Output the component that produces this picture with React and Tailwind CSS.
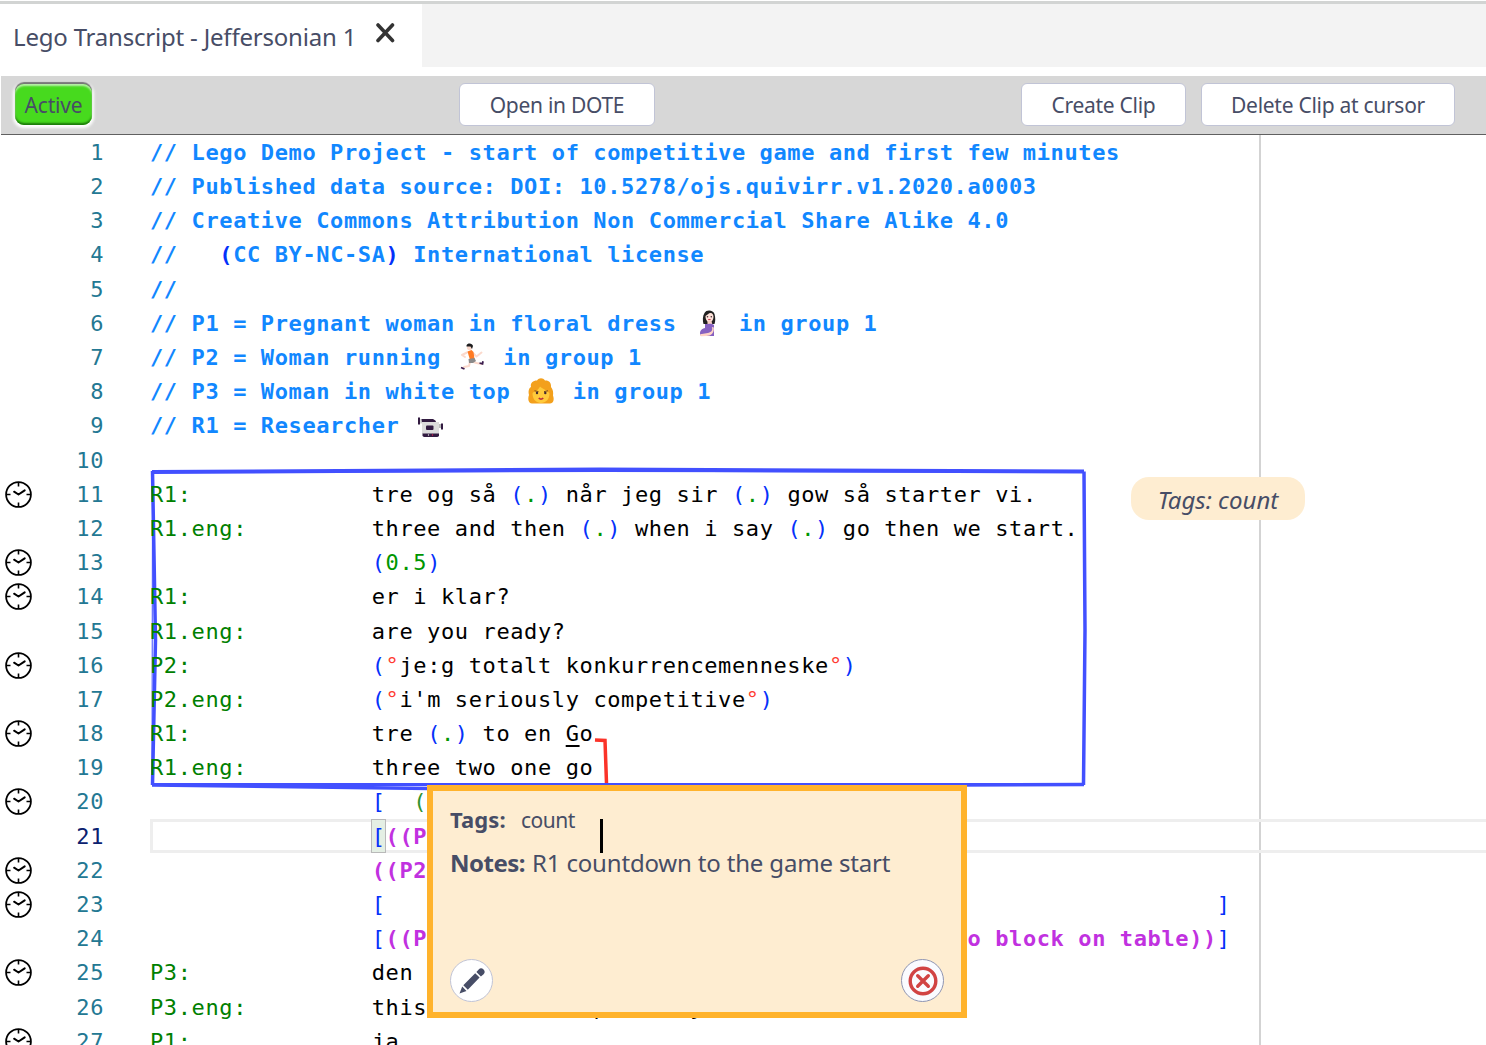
import React from "react";

const CODE =
  "font-['DejaVu_Sans_Mono',monospace] text-[22px] tracking-[0.610px] whitespace-pre";
const UI = "font-['Noto_Sans','Open_Sans',sans-serif] text-[#474d66] whitespace-nowrap";

const TONES = {
  c: "font-bold text-[#1187ff]",
  b: "text-[#0431fa]",
  bb: "font-bold text-[#0431fa]",
  s: "text-[#008000]",
  d: "text-[#009600]",
  t: "text-black",
  u: "text-black underline decoration-2 underline-offset-[4px]",
  r: "text-[#ff3a30]",
  g: "text-[#319331]",
  m: "font-bold text-[#c131e0]",
};

function Emoji({ children }) {
  return (
    <svg viewBox="0 0 34 34" className="mr-[0.7px] inline-block h-[34px] w-[34px] shrink-0">
      {children}
    </svg>
  );
}

const Pregnant = () => (
  <Emoji>
    <path d="M13.500 17c-1-3-1-8 1-11 2-4 9-3 10 1 1 4 1 7 0 10z" fill="#212121" />
    <path d="M15.500 9c2-1 3-3 5-3 2 0 3 2 3 4 0 3-2 5-4 5s-4-2-4-6z" fill="#ffe3da" />
    <path d="M17.500 14h4l1 4h-5z" fill="#f7cfc4" />
    <path d="M15 17c3 0 7-1 9 1v11H11c-2-3-1-7 4-8z" fill="#8661c1" />
    <path d="M21.800 20c1.500 3.500-1 5.500-4 6l-6 1c-2 0-2.500 2-.5 2.200l5-.2c5 0 8-3 7.500-8.500z" fill="#ffd4c6" />
    <circle cx="17.500" cy="9.800" r=".8" fill="#402a32" />
    <circle cx="21.300" cy="9.800" r=".8" fill="#402a32" />
    <path d="M18.200 12.600h2.400" stroke="#c72e4a" strokeWidth="1" />
  </Emoji>
);

const Runner = () => (
  <Emoji>
    <path d="M12 11.500L7 14l3 2M18.500 12.500l3 3 5-4M15 21l-1 4-5 1-1 1.500M18.500 21l3 1 5 1" stroke="#fbd9cc" strokeWidth="2" fill="none" strokeLinecap="round" strokeLinejoin="round" />
    <path d="M12.500 10.500l4-1.500 2 2 1 7-4.500 1z" fill="#ff7a22" />
    <path d="M13.500 18l6-1 1.500 3-3 2-4 0z" fill="#8a8a8a" />
    <circle cx="14.500" cy="6.500" r="2.600" fill="#fbd9cc" />
    <path d="M11.500 4.500c1-3 6-2.500 6.500.5l-1 3-1.500-2.500-4 0z" fill="#1d1d1f" />
    <path d="M6 26.500l3.500 1.500M24.500 22l3 .8.500-2.500" stroke="#3b1d4e" strokeWidth="1.800" fill="none" />
  </Emoji>
);

const Woman = () => (
  <Emoji>
    <path d="M5 20C4 16 5 13 7 12 6 8 9 5.500 13 5.500c2-3 6-3 8 0 4-.3 6.500 2.500 6 6.500 2 2.500 2.500 5.500 2 8.500 1.500 4 .5 8-3 8H8C4.500 28.500 3.500 24 5 20z" fill="#f3a01c" />
    <path d="M8.500 18.500c.5-2 5-2 7.500-7 3 3 7 3 9.500 7 0 6-4 9.500-8.500 9.500s-8.500-3.500-8.500-9.500z" fill="#ffca3b" />
    <path d="M10.500 15.800l4 .8M20 16.600l4-.8" stroke="#7a4a20" strokeWidth="1" />
    <circle cx="13" cy="18" r="1.200" fill="#402a32" />
    <circle cx="21.300" cy="18" r="1.200" fill="#402a32" />
    <path d="M14.700 23.200c1.200 1 3.400 1 4.600 0" stroke="#b92c3c" strokeWidth="1.500" fill="none" />
  </Emoji>
);

const Camera = () => (
  <Emoji>
    <rect x="6.500" y="10" width="4" height="4.500" fill="#d8d8d8" />
    <rect x="5" y="8.500" width="2" height="7" fill="#321b41" />
    <path d="M8.500 10H20q3 1 3.500 4H9z" fill="#321b41" />
    <rect x="9" y="13" width="17" height="12" fill="#dcdcdc" />
    <rect x="13" y="16.500" width="7.500" height="4.500" rx="1" fill="#321b41" />
    <rect x="26" y="15" width="2" height="4" fill="#bbb" />
    <rect x="28" y="14.500" width="2" height="6" fill="#321b41" />
    <path d="M9.500 24.500H26v1.700q0 1.800-1.800 1.800H11.300q-1.800 0-1.800-1.800z" fill="#321b41" />
    <circle cx="19.500" cy="26" r=".7" fill="#e02050" />
    <circle cx="15.500" cy="26" r=".7" fill="#e8e8e8" />
  </Emoji>
);

function ClockIcon() {
  return (
    <svg viewBox="0 0 28 28" className="h-7 w-7" fill="none" stroke="#000">
      <circle cx="14.500" cy="14.500" r="12.400" strokeWidth="1.800" />
      <path d="M14.500 2.500v4M14.500 22.500v4M2.500 14.500h4M22.500 14.500h4" strokeWidth="1.600" />
      <path d="M10.100 11.700L14.500 14.500l6.200-4.200" strokeWidth="2" strokeLinecap="round" strokeLinejoin="round" />
    </svg>
  );
}

const sp = (n) => " ".repeat(n);
const talk = (who, ...rest) => [["s", who], ["t", sp(16 - who.length)], ...rest];

const LINES = [
  [["c", "// Lego Demo Project - start of competitive game and first few minutes"]],
  [["c", "// Published data source: DOI: 10.5278/ojs.quivirr.v1.2020.a0003"]],
  [["c", "// Creative Commons Attribution Non Commercial Share Alike 4.0"]],
  [["c", "//   "], ["bb", "("], ["c", "CC BY-NC-SA"], ["bb", ")"], ["c", " International license"]],
  [["c", "//"]],
  [["c", "// P1 = Pregnant woman in floral dress "], ["e", Pregnant], ["c", " in group 1"]],
  [["c", "// P2 = Woman running "], ["e", Runner], ["c", " in group 1"]],
  [["c", "// P3 = Woman in white top "], ["e", Woman], ["c", " in group 1"]],
  [["c", "// R1 = Researcher "], ["e", Camera]],
  [],
  talk("R1:", ["t", "tre og så "], ["b", "("], ["d", "."], ["b", ")"], ["t", " når jeg sir "], ["b", "("], ["d", "."], ["b", ")"], ["t", " gow så starter vi."]),
  talk("R1.eng:", ["t", "three and then "], ["b", "("], ["d", "."], ["b", ")"], ["t", " when i say "], ["b", "("], ["d", "."], ["b", ")"], ["t", " go then we start."]),
  talk("", ["b", "("], ["d", "0.5"], ["b", ")"]),
  talk("R1:", ["t", "er i klar?"]),
  talk("R1.eng:", ["t", "are you ready?"]),
  talk("P2:", ["b", "("], ["r", "°"], ["t", "je:g totalt konkurrencemenneske"], ["r", "°"], ["b", ")"]),
  talk("P2.eng:", ["b", "("], ["r", "°"], ["t", "i'm seriously competitive"], ["r", "°"], ["b", ")"]),
  talk("R1:", ["t", "tre "], ["b", "("], ["d", "."], ["b", ")"], ["t", " to en "], ["u", "G"], ["t", "o"]),
  talk("R1.eng:", ["t", "three two one go"]),
  talk("", ["b", "["], ["t", "  "], ["g", "("]),
  talk("", ["b", "["], ["m", "((P"]),
  talk("", ["m", "((P2"]),
  talk("", ["b", "["], ["t", sp(60)], ["b", "]"]),
  talk("", ["b", "["], ["m", "((P" + sp(39) + "o block on table))"], ["b", "]"]),
  talk("P3:", ["t", "den"]),
  talk("P3.eng:", ["t", "this" + sp(12) + "possibly"]),
  talk("P1:", ["t", "ja"]),
];

const CLOCKS = new Set([11, 13, 14, 16, 18, 20, 22, 23, 25, 27]);

function Row({ n, parts }) {
  return (
    <div className="flex h-[34.2px] items-center leading-[34px]">
      <div className="flex w-[47px] shrink-0 pb-[2px] pl-1">{CLOCKS.has(n) && <ClockIcon />}</div>
      <div className={`${CODE} w-[57px] shrink-0 text-right ${n === 21 ? "text-[#0b216f]" : "text-[#237893]"}`}>{n}</div>
      <div className={`${CODE} flex pl-[46px]`}>
        {parts.map(([k, v], i) =>
          k === "e" ? React.createElement(v, { key: i }) : <span key={i} className={TONES[k]}>{v}</span>
        )}
      </div>
    </div>
  );
}

function ToolButton({ className, children }) {
  return (
    <button className={`${UI} flex h-[43px] items-center justify-center rounded-[6px] border border-[#c1c4d6] bg-white pt-[3px] text-[21px] tracking-[-0.28px] ${className}`}>
      {children}
    </button>
  );
}

export default function App() {
  return (
    <div className="flex h-[1045px] w-[1486px] flex-col overflow-hidden bg-white">
      <div className="mt-px h-[3px] shrink-0 bg-[#d2d4d3]" />
      <div className="flex h-[63px] shrink-0 bg-[#f3f3f3]">
        <div className="flex w-[422px] bg-white pl-[13px]">
          <span className={`${UI} mt-[15px] w-[362px] text-[24px] leading-[36px] tracking-[-0.2px]`}>Lego Transcript - Jeffersonian 1</span>
          <svg viewBox="0 0 20 20" className="mt-[19px] h-5 w-5" fill="none" stroke="#333" strokeWidth="3.600" strokeLinecap="round">
            <path d="M3 2L17.500 17.500M17.500 2L3 17.500" />
          </svg>
        </div>
      </div>
      <div className="mt-[9px] ml-px flex h-[59px] shrink-0 items-start border-b border-[#606060] bg-[#d7d7d7] pt-[7px] pr-[31px] pl-[14px]">
        <button className={`${UI} mt-px flex h-[41px] w-[77px] items-center justify-center rounded-[9px] bg-[#47da1e] pt-[3px] text-[21px] tracking-[-0.15px] shadow-[0_-2px_1px_#777,0_1px_3px_2px_#fff,inset_0_2px_2px_#b9efaa,inset_0_-2px_2px_#1c7a0a]`}>Active</button>
        <ToolButton className="ml-[367px] w-[196px]">Open in DOTE</ToolButton>
        <ToolButton className="ml-auto w-[165px]">Create Clip</ToolButton>
        <ToolButton className="ml-[15px] w-[254px]">Delete Clip at cursor</ToolButton>
      </div>

      <div className="relative min-h-0 grow overflow-hidden">
        <div className="absolute top-0 bottom-0 left-[1259px] w-[2px] bg-[#d3d3d3]" />
        <div className="absolute top-[684px] right-0 left-[150px] h-[34px] border-y-[3px] border-l-[3px] border-[#eee]" />
        <div className="absolute top-[684px] left-[371px] h-[34px] w-[15px] border border-[#b9b9b9] bg-[#e4efe4]" />
        <svg className="absolute top-[325px] left-[140px]" width="960" height="345" viewBox="140 460 960 345" fill="none" stroke="#4250ff">
          <path d="M152 472L600 469.500L1084 471.500" strokeWidth="4" />
          <path d="M152 472L600 471L1084 472" strokeWidth="2" />
          <path d="M152.500 471L155.500 640L152.500 785" strokeWidth="3.500" />
          <path d="M152.500 471L152 785" strokeWidth="1" />
          <path d="M1084 471.500L1085 630L1083.500 785" strokeWidth="3.500" />
          <path d="M152 785L430 788.500L700 786L1084 784.500" strokeWidth="3.500" />
          <path d="M152 784.500L430 784.500L1084 784.500" strokeWidth="3" />
          <path d="M595 740L605 740.500L606.500 783" stroke="#fb3329" strokeWidth="3.500" />
        </svg>
        <div className="relative pt-[0.8px]">
          {LINES.map((parts, i) => (
            <Row key={i} n={i + 1} parts={parts} />
          ))}
        </div>
        <div className={`${UI} absolute top-[342px] left-[1131px] flex h-[43px] w-[174px] items-center justify-center rounded-[18px] bg-[#feedd1] pt-[3px] text-[24px] italic`}>
          Tags: count
        </div>
        <div className="absolute top-[650px] left-[427px] flex h-[233px] w-[540px] flex-col border-[6px] border-[#ffb32c] bg-[#feedd1] px-[17px] pt-[12px] pb-[10px]">
          <div className={`${UI} flex h-[32px] items-center gap-[14px] text-[21px]`}>
            <b className="w-[57px] text-[22px] tracking-[0.1px]">Tags:</b>
            <span className="pt-[3px] tracking-[-0.5px]">count</span>
          </div>
          <div className={`${UI} mt-[10px] flex h-[36px] items-center text-[24px]`}>
            <b className="w-[82px] tracking-[-0.5px]">Notes:</b>
            <span className="tracking-[-0.17px]">R1 countdown to the game start</span>
          </div>
          <div className="mt-auto flex justify-between">
            <button className="flex h-[43px] w-[43px] items-center justify-center rounded-full border border-[#c1c4d6] bg-white">
              <svg viewBox="0 0 28 28" className="h-7 w-7" fill="#474d66">
                <path d="M1.500 26.500L4.200 19.500L8.500 24zM5.300 18.300L17.200 6.200L21.600 10.600L9.800 22.700zM18.400 5L20.700 2.400Q23 .2 25.600 2.400Q27.800 4.800 25.600 7.200L22.900 9.500z" />
              </svg>
            </button>
            <button className="flex h-[43px] w-[43px] items-center justify-center rounded-full border border-[#8f95b2] bg-[#fafbff]">
              <svg viewBox="0 0 30 30" className="h-[30px] w-[30px]" fill="none" stroke="#d14343" strokeWidth="3.400" strokeLinecap="round">
                <circle cx="15" cy="15" r="12.800" />
                <path d="M9.700 9.700l10.600 10.600M20.300 9.700L9.700 20.300" />
              </svg>
            </button>
          </div>
        </div>
        <div className="absolute top-[684px] left-[600px] h-[34px] w-[3px] bg-black" />
      </div>
    </div>
  );
}
